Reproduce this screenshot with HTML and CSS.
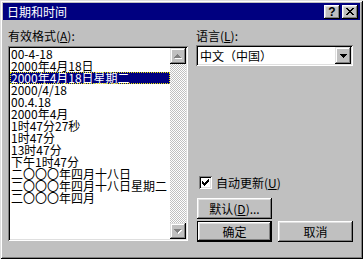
FILE: index.html
```html
<!DOCTYPE html>
<html lang="zh">
  <head>
    <meta charset="UTF-8" />
    <title>日期和时间</title>
    <link rel="stylesheet" href="styles.css">
  </head>
  <body>
    <section class="window">
      <div class="titlebar">
        <span class="title">日期和时间</span>
        <span class="cap-btn help">?</span>
        <span class="cap-btn close">
          <svg width="8" height="7" viewBox="0 0 8 7" shape-rendering="crispEdges"><path d="M0 0h2v1H0z M6 0h2v1H6z M1 1h2v1H1z M5 1h2v1H5z M2 2h4v1H2z M3 3h2v1H3z M2 4h4v1H2z M1 5h2v1H1z M5 5h2v1H5z M0 6h2v1H0z M6 6h2v1H6z" fill="#000"/></svg>
        </span>
      </div>
      <div class="body">
        <div class="col-left">
          <div class="label">有效格式(<u>A</u>):</div>
          <div class="listbox">
            <ul class="items">
              <li>00-4-18</li>
              <li>2000年4月18日</li>
              <li class="selected">2000年4月18日星期二</li>
              <li>2000/4/18</li>
              <li>00.4.18</li>
              <li>2000年4月</li>
              <li>1时47分27秒</li>
              <li>1时47分</li>
              <li>13时47分</li>
              <li>下午1时47分</li>
              <li>二〇〇〇年四月十八日</li>
              <li>二〇〇〇年四月十八日星期二</li>
              <li>二〇〇〇年四月</li>
            </ul>
            <div class="scrollbar">
              <div class="sb-btn">
                <svg width="8" height="5" viewBox="0 0 8 5" shape-rendering="crispEdges">
                  <path d="M4 1h1v1h1v1h1v1h1v1H1v-1h1v-1h1v-1h1z" fill="#fff"/>
                  <path d="M3 0h1v1h1v1h1v1h1v1H0v-1h1v-1h1v-1h1z" fill="#808080"/>
                </svg>
              </div>
              <div class="sb-track"></div>
              <div class="sb-btn">
                <svg width="8" height="5" viewBox="0 0 8 5" shape-rendering="crispEdges">
                  <path d="M1 1h7v1h-1v1h-1v1h-1v1h-1v-1h-1v-1h-1v-1h-1z" fill="#fff"/>
                  <path d="M0 0h7v1h-1v1h-1v1h-1v1h-1v-1h-1v-1h-1v-1h-1z" fill="#808080"/>
                </svg>
              </div>
            </div>
          </div>
        </div>
        <div class="col-right">
          <div class="label">语言(<u>L</u>):</div>
          <div class="combo">
            <span class="combo-text">中文（中国）</span>
            <span class="combo-btn">
              <svg width="7" height="4" viewBox="0 0 7 4" shape-rendering="crispEdges"><path d="M0 0h7v1h-1v1h-1v1h-1v1h-1v-1h-1v-1h-1v-1h-1z" fill="#000"/></svg>
            </span>
          </div>
          <div class="check-row">
            <span class="checkbox">
              <svg width="7" height="7" viewBox="0 0 7 7" shape-rendering="crispEdges"><path d="M0 2h1v3H0z M1 3h1v3H1z M2 4h1v3H2z M3 3h1v3H3z M4 2h1v3H4z M5 1h1v3H5z M6 0h1v3H6z" fill="#000"/></svg>
            </span>
            <span>自动更新(<u>U</u>)</span>
          </div>
          <div class="btn">默认(<u>D</u>)...</div>
          <div class="btn-row">
            <div class="btn default">确定</div>
            <div class="btn">取消</div>
          </div>
        </div>
      </div>
    </section>
  </body>
</html>
```
FILE: styles.css
```css
html, body {
  margin: 0;
  padding: 0;
}
body {
  width: 363px;
  height: 259px;
  overflow: hidden;
  background: #c0c0c0;
}
.window {
  width: 363px;
  height: 259px;
  box-sizing: border-box;
  padding: 3px;
  background: #c0c0c0;
  box-shadow: inset 1px 1px #dfdfdf, inset -1px -1px #000, inset 2px 2px #fff, inset -2px -2px #808080;
  font: 12px "Noto Sans CJK SC", sans-serif;
  color: #000;
}
.titlebar {
  height: 17px;
  background: #000080;
  color: #fff;
  display: flex;
  align-items: center;
  padding: 0 2px 0 4px;
}
.title {
  flex-grow: 1;
  font-size: 12px;
  line-height: 17px;
}
.cap-btn {
  width: 16px;
  height: 14px;
  box-sizing: border-box;
  background: #c0c0c0;
  box-shadow: inset -1px -1px #000, inset 1px 1px #fff, inset -2px -2px #808080, inset 2px 2px #dfdfdf;
  display: flex;
  align-items: center;
  justify-content: center;
  color: #000;
}
.help {
  margin-right: 2px;
  font: bold 12px "Liberation Sans", sans-serif;
  line-height: 14px;
}
.body {
  display: flex;
  gap: 8px;
  padding: 9px 5px 0 5px;
}
.col-left {
  width: 180px;
}
.col-right {
  width: 157px;
  display: flex;
  flex-direction: column;
}
.label {
  height: 14px;
  line-height: 14px;
}
.listbox {
  margin-top: 3px;
  height: 195px;
  box-sizing: border-box;
  padding: 2px;
  display: flex;
  box-shadow: inset 1px 1px #808080, inset -1px -1px #fff, inset 2px 2px #000, inset -2px -2px #dfdfdf;
}
.items {
  flex-grow: 1;
  margin: 0;
  padding: 0;
  list-style: none;
  background: #fff;
}
.items li {
  height: 12px;
  line-height: 12px;
  padding-left: 1px;
  white-space: nowrap;
}
.items li.selected {
  background: #000080;
  color: #fff;
  outline: 1px dotted #e8e800;
  outline-offset: -1px;
}
.scrollbar {
  width: 16px;
  display: flex;
  flex-direction: column;
}
.sb-btn {
  height: 16px;
  box-sizing: border-box;
  background: #c0c0c0;
  box-shadow: inset -1px -1px #000, inset 1px 1px #dfdfdf, inset -2px -2px #808080, inset 2px 2px #fff;
  display: flex;
  align-items: center;
  justify-content: center;
}
.sb-track {
  flex-grow: 1;
  background-image: conic-gradient(#fff 25%, #c0c0c0 0 50%, #fff 0 75%, #c0c0c0 0);
  background-size: 2px 2px;
}
.combo {
  margin-top: 2px;
  height: 21px;
  box-sizing: border-box;
  padding: 2px;
  display: flex;
  background: #fff;
  box-shadow: inset 1px 1px #808080, inset -1px -1px #fff, inset 2px 2px #000, inset -2px -2px #dfdfdf;
}
.combo-text {
  flex-grow: 1;
  padding-left: 2px;
  line-height: 17px;
}
.combo-btn {
  width: 16px;
  height: 17px;
  box-sizing: border-box;
  background: #c0c0c0;
  box-shadow: inset -1px -1px #000, inset 1px 1px #dfdfdf, inset -2px -2px #808080, inset 2px 2px #fff;
  display: flex;
  align-items: center;
  justify-content: center;
}
.check-row {
  margin-top: 109px;
  height: 14px;
  display: flex;
  align-items: center;
  gap: 4px;
  padding-left: 3px;
}
.checkbox {
  width: 13px;
  height: 13px;
  box-sizing: border-box;
  background: #fff;
  box-shadow: inset 1px 1px #808080, inset -1px -1px #fff, inset 2px 2px #000, inset -2px -2px #dfdfdf;
  display: flex;
  align-items: center;
  justify-content: center;
}
.btn {
  width: 75px;
  height: 21px;
  box-sizing: border-box;
  margin-left: 1px;
  background: #c0c0c0;
  box-shadow: inset -1px -1px #000, inset 1px 1px #fff, inset -2px -2px #808080, inset 2px 2px #dfdfdf;
  text-align: center;
  line-height: 21px;
}
.col-right > .btn {
  margin-top: 9px;
}
.btn-row {
  margin-top: 2px;
  display: flex;
  gap: 6px;
}
.btn-row .btn {
  margin-left: 0;
}
.btn-row .btn:first-child {
  margin-left: 1px;
}
.btn.default {
  border: 1px solid #000;
  line-height: 19px;
}
```
